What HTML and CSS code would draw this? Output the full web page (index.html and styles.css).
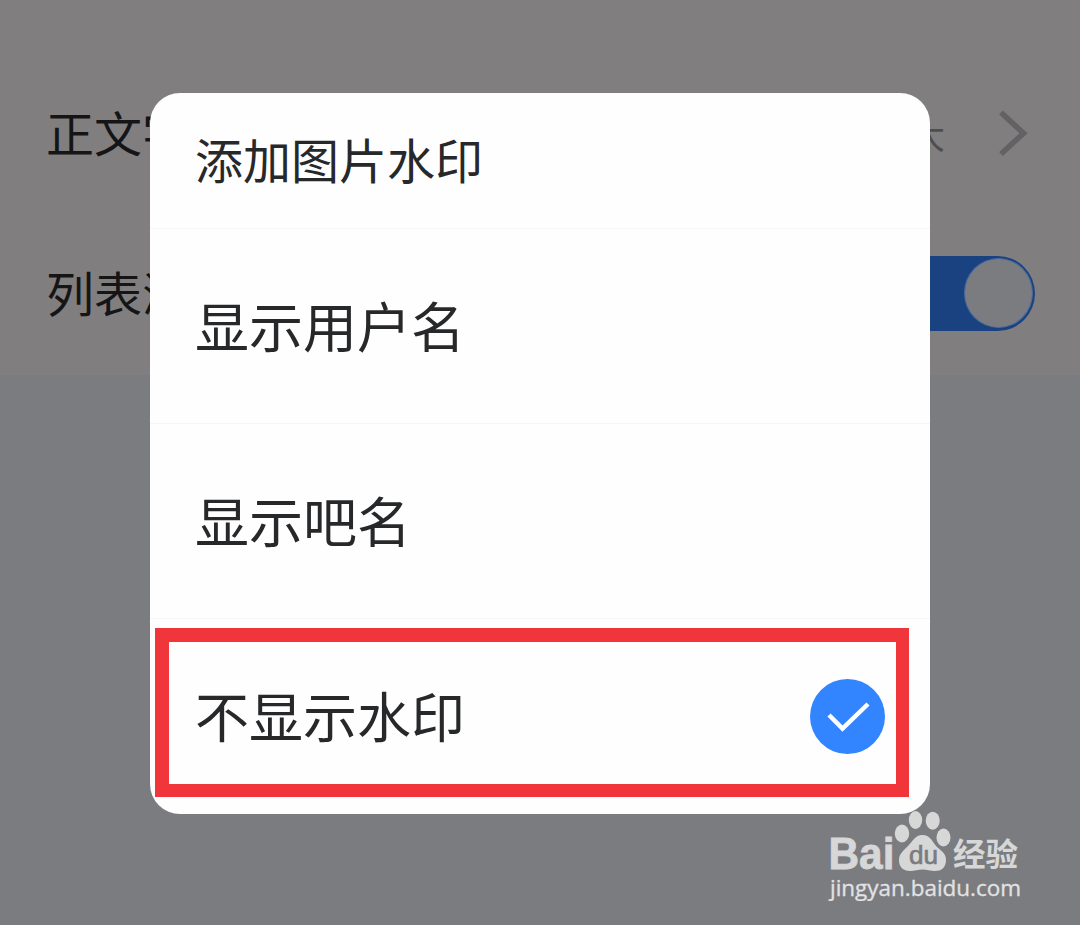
FILE: index.html
```html
<!DOCTYPE html>
<html lang="zh-CN">
<head>
<meta charset="utf-8">
<title>添加图片水印</title>
<link rel="stylesheet" href="styles.css">
</head>
<body>
<main class="screen">
  <section class="settings">
    <div class="setting">
      <span class="setting-label">正文字</span>
      <span class="setting-value">大</span>
      <svg class="chevron" viewBox="0 0 32 48"><path d="M3 3.500L25.500 24.300L3 45"/></svg>
    </div>
    <div class="setting">
      <span class="setting-label">列表浏</span>
      <span class="switch"><span class="knob"></span></span>
    </div>
  </section>

  <div class="dialog" role="dialog">
    <h1 class="dialog-title">添加图片水印</h1>
    <div class="option"><span>显示用户名</span></div>
    <div class="option"><span>显示吧名</span></div>
    <div class="option">
      <span>不显示水印</span>
      <svg class="check" viewBox="0 0 75 75"><circle cx="37.500" cy="37.500" r="37.500"/><path d="M19 36L32.500 49.500L58 25"/></svg>
    </div>
    <div class="highlight"></div>
  </div>

  <svg class="watermark" viewBox="0 0 210 110">
    <g class="logo">
      <text class="brand" x="8.500" y="78" textLength="66" lengthAdjust="spacingAndGlyphs">Bai</text>
      <ellipse cx="82" cy="42.500" rx="7.200" ry="9"/>
      <ellipse cx="95.500" cy="29" rx="6.700" ry="9"/>
      <ellipse cx="112.700" cy="29.700" rx="7" ry="9"/>
      <ellipse cx="123.500" cy="46.500" rx="7" ry="9"/>
      <path d="M102.500 44C110 44 112 50 116 55C121 60 126 62 126 69C126 77 121 80 115 80C110 80 107 78.500 102.500 78.500C98 78.500 95 80 90 80C83 80 79 76 79 69C79 63 83 60 88 55C93 50 95 44 102.500 44Z"/>
      <text class="brand-cn" x="133" y="75" textLength="65" lengthAdjust="spacingAndGlyphs">经验</text>
    </g>
    <text class="du" x="89" y="73" textLength="29" lengthAdjust="spacingAndGlyphs">du</text>
    <text class="site" x="10" y="104.500" textLength="191" lengthAdjust="spacingAndGlyphs">jingyan.baidu.com</text>
  </svg>
</main>
</body>
</html>
```
FILE: styles.css
```css
* {
  box-sizing: border-box;
}

body {
  margin: 0;
}

.screen {
  position: relative;
  width: 1080px;
  height: 925px;
  overflow: hidden;
  background: #7b7c80;
  font-family: "Noto Sans CJK SC", sans-serif;
}

.settings {
  height: 375px;
  padding: 53px 45px 0 46px;
  background: #817e80;
}

.setting {
  display: flex;
  align-items: center;
  height: 160px;
}

.setting-label {
  flex: 1;
  padding-bottom: 5px;
  color: #151516;
  font-size: 48px;
  line-height: 72px;
}

.setting-value {
  margin-right: 53px;
  padding-bottom: 1px;
  color: #4e4d4f;
  font-size: 36px;
}

.chevron {
  width: 32px;
  height: 48px;
  margin-right: 5px;
  fill: none;
  stroke: #626163;
  stroke-width: 5.500;
}

.switch {
  display: flex;
  justify-content: flex-end;
  width: 150px;
  height: 75px;
  padding: 2px 2px 3px;
  border-radius: 38px;
  background: #1b4280;
}

.knob {
  width: 69px;
  height: 70px;
  border: 1px solid #496a9b;
  border-radius: 50%;
  background: #7b7c80;
}

.dialog {
  position: absolute;
  left: 150px;
  top: 93px;
  width: 780px;
  height: 721px;
  overflow: hidden;
  border-radius: 30px;
  background: #fefefe;
  color: #27282a;
}

.dialog-title {
  height: 135px;
  margin: 0;
  padding-left: 45px;
  font-size: 48px;
  font-weight: 400;
  line-height: 131px;
}

.option {
  display: flex;
  align-items: center;
  justify-content: space-between;
  height: 195px;
  padding: 0 45px;
  border-top: 1px solid #f6f6f6;
  font-size: 54px;
  line-height: 80px;
}

.option span {
  padding-bottom: 2px;
}

.check {
  width: 75px;
  height: 75px;
  fill: #3385ff;
}

.check path {
  fill: none;
  stroke: #fff;
  stroke-width: 4.500;
}

.highlight {
  position: absolute;
  left: 5px;
  top: 535px;
  width: 754px;
  height: 169px;
  border: 14px solid #f0363a;
  border-width: 14px 13px 13px 14px;
}

.watermark {
  position: absolute;
  left: 820px;
  top: 791px;
  width: 210px;
  height: 110px;
}

.logo {
  fill: #d7d7d8;
}

.brand {
  stroke: #d7d7d8;
  stroke-width: 0.800;
  font: bold 44px "Liberation Sans", sans-serif;
}

.brand-cn {
  font: 700 32px "Noto Sans CJK SC", sans-serif;
}

.du {
  fill: #7b7c80;
  stroke: #7b7c80;
  stroke-width: 0.700;
  font: 26px "Liberation Sans", sans-serif;
}

.site {
  fill: #e2e2e3;
  stroke: #e2e2e3;
  stroke-width: 0.300;
  font: 21px "Open Sans", sans-serif;
}
```
